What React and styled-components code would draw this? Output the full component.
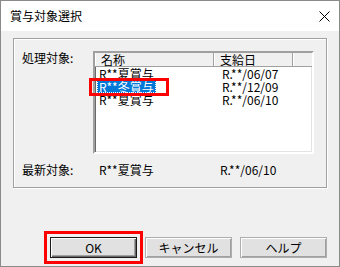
import styled, { createGlobalStyle } from 'styled-components';

const GlobalStyle = createGlobalStyle`
  html, body {
    margin: 0;
    padding: 0;
    background: #fff;
  }
  * {
    box-sizing: border-box;
  }
`;

const font = `'Noto Sans CJK JP', 'Liberation Sans', sans-serif`;

const Window = styled.div`
  width: 340px;
  height: 267px;
  border: 1px solid #8a8a8a;
  background: #f0f0f0;
  display: flex;
  flex-direction: column;
  font-family: ${font};
  font-size: 12px;
  color: #000;
  position: relative;
`;

const TitleBar = styled.div`
  height: 30px;
  background: #fff;
  display: flex;
  align-items: center;
  justify-content: space-between;
  padding: 0 9px 0 9px;
  flex: none;
`;

const Title = styled.span`
  font-size: 12px;
  line-height: 12px;
`;

const CloseButton = styled.div`
  width: 12px;
  height: 12px;
  display: flex;
  align-items: center;
  justify-content: center;
`;

const Body = styled.div`
  flex: 1;
  display: flex;
  flex-direction: column;
  padding: 7px 12px 0 12px;
`;

// 処理対象 グループ
const GroupBox = styled.div`
  width: 314px;
  height: 150px;
  border: 1px solid #a0a0a0;
  box-shadow: inset 1px 1px 0 #fff, 1px 1px 0 #fff;
  padding: 12px 0 0 8px;
  display: flex;
  flex-direction: column;
`;

const TopRow = styled.div`
  display: grid;
  grid-template-columns: 71px 221px;
`;

const Label = styled.div`
  line-height: 12px;
  padding-top: ${(p) => p.$top || 0}px;
  white-space: nowrap;
`;

const ListView = styled.div`
  height: 103px;
  background: #fff;
  border-style: solid;
  border-width: 2px;
  border-color: #a0a0a0 #ffffff #ffffff #a0a0a0;
  box-shadow: inset 1px 1px 0 #696969, inset -1px -1px 0 #e3e3e3;
  display: flex;
  flex-direction: column;
  position: relative;
`;

const Header = styled.div`
  display: grid;
  grid-template-columns: 119px 79px 1fr;
  height: 14px;
  flex: none;
`;

const HeaderCell = styled.div`
  background: #f0f0f0;
  border-right: 1px solid #a0a0a0;
  border-bottom: 1px solid #a0a0a0;
  box-shadow: inset 1px 0 0 #fff;
  padding-left: ${(p) => p.$pad || 6}px;
  line-height: 13px;
  height: 14px;
  white-space: nowrap;
  &:last-child {
    border-right: none;
  }
`;

const Row = styled.div`
  display: grid;
  grid-template-columns: 119px 79px 1fr;
  height: 13px;
  flex: none;
`;

const Cell = styled.div`
  padding-left: ${(p) => p.$pad || 2}px;
  height: 13px;
  white-space: nowrap;
`;

const CellText = styled.span`
  display: inline-block;
  vertical-align: top;
  height: 13px;
  line-height: 13px;
  padding: 0 2px;
  background: ${(p) => (p.$selected ? '#0078d7' : 'transparent')};
  color: ${(p) => (p.$selected ? '#fff' : '#000')};
  outline: ${(p) => (p.$selected ? '1px dotted #fff' : 'none')};
  outline-offset: -1px;
`;

// 赤枠 (注釈)
const Marker = styled.span`
  position: absolute;
  border: 3px solid #ff0000;
  pointer-events: none;
  left: ${(p) => p.$left}px;
  top: ${(p) => p.$top}px;
  width: ${(p) => p.$width}px;
  height: ${(p) => p.$height}px;
`;

const LatestRow = styled.div`
  display: grid;
  grid-template-columns: 77px 121px 1fr;
  margin-top: 10px;
  line-height: 12px;
  white-space: nowrap;
`;

const ButtonBar = styled.div`
  display: flex;
  justify-content: flex-end;
  gap: 8px;
  margin-top: 49px;
`;

const Button = styled.div`
  width: 87px;
  height: 21px;
  display: flex;
  align-items: center;
  justify-content: center;
  background: #e1e1e1;
  border: 1px solid ${(p) => (p.$default ? '#1a1a1a' : '#adadad')};
  box-shadow: ${(p) =>
    p.$default
      ? 'inset 1px 1px 0 #fff, inset -1px -1px 0 #696969, inset -2px -2px 0 #a0a0a0'
      : 'inset 1px 1px 0 #fff, inset -1px -1px 0 #a0a0a0'};
  font-size: 12px;
  line-height: 12px;
  outline: ${(p) => (p.$marked ? '3px solid #ff0000' : 'none')};
  outline-offset: 3px;
`;

const rows = [
  { name: 'R**夏賞与', date: 'R.**/06/07' },
  { name: 'R**冬賞与', date: 'R.**/12/09', selected: true },
  { name: 'R**夏賞与', date: 'R.**/06/10' },
];

function App() {
  return (
    <>
      <GlobalStyle />
      <Window>
        <TitleBar>
          <Title>賞与対象選択</Title>
          <CloseButton>
            <svg width="11" height="11" viewBox="0 0 11 11">
              <path d="M0.5 0.5 L10.5 10.5 M10.5 0.5 L0.5 10.5" stroke="#000" strokeWidth="1" fill="none" />
            </svg>
          </CloseButton>
        </TitleBar>
        <Body>
          <GroupBox>
            <TopRow>
              <Label $top={1}>処理対象:</Label>
              <ListView>
                <Header>
                  <HeaderCell $pad={6}>名称</HeaderCell>
                  <HeaderCell $pad={6}>支給日</HeaderCell>
                  <HeaderCell />
                </Header>
                {rows.map((r, i) => (
                  <Row key={i}>
                    <Cell $pad={2}>
                      <CellText $selected={r.selected}>{r.name}</CellText>
                    </Cell>
                    <Cell $pad={6}>
                      <CellText>{r.date}</CellText>
                    </Cell>
                    <Cell />
                  </Row>
                ))}
                <Marker $left={-6} $top={25} $width={80} $height={18} />
              </ListView>
            </TopRow>
            <LatestRow>
              <span>最新対象:</span>
              <span>R**夏賞与</span>
              <span>R.**/06/10</span>
            </LatestRow>
          </GroupBox>
          <ButtonBar>
            <Button $default $marked>OK</Button>
            <Button>キャンセル</Button>
            <Button>ヘルプ</Button>
          </ButtonBar>
        </Body>
      </Window>
    </>
  );
}

export default App;
